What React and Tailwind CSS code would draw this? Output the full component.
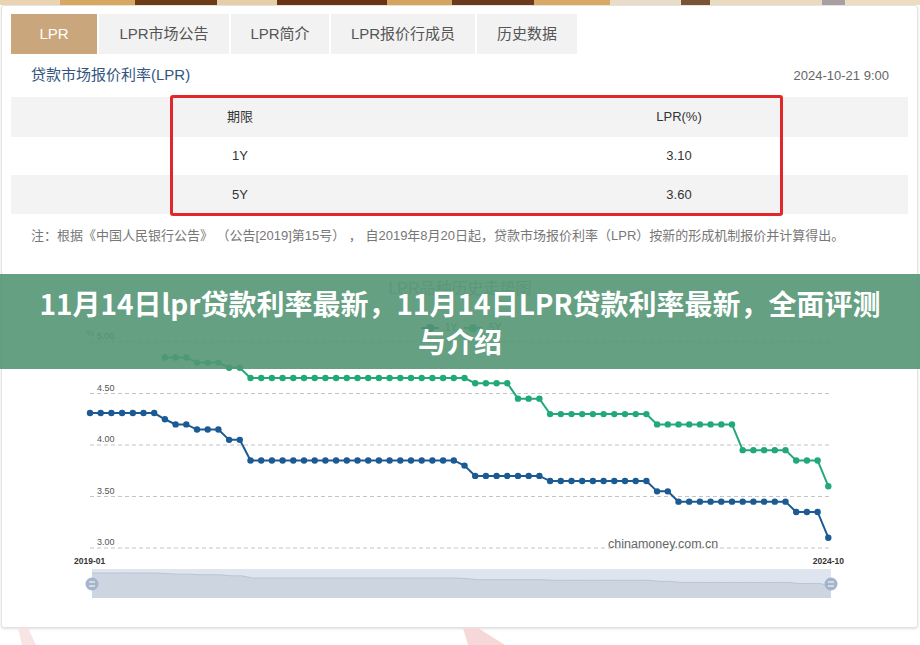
import React from 'react';

const strip = [
  { w: 'w-[60px]', c: 'bg-[#e9d3b0]' },
  { w: 'w-[75px]', c: 'bg-[#d9a860]' },
  { w: 'w-[82px]', c: 'bg-[#6e3b17]' },
  { w: 'w-[60px]', c: 'bg-[#e6cfa8]' },
  { w: 'w-[110px]', c: 'bg-[#6a3414]' },
  { w: 'w-[65px]', c: 'bg-[#d6a45c]' },
  { w: 'w-[82px]', c: 'bg-[#6b3a1c]' },
  { w: 'w-[76px]', c: 'bg-[#d8a864]' },
  { w: 'w-[71px]', c: 'bg-[#e8dcc8]' },
  { w: 'w-[29px]', c: 'bg-[#7a5236]' },
  { w: 'w-[112px]', c: 'bg-[#eadbc0]' },
  { w: 'w-[23px]', c: 'bg-[#a8a0a0]' },
  { w: 'flex-1', c: 'bg-[#ecdcc0]' },
];

const tabs = [
  { label: 'LPR', w: 'w-[86px]', active: true },
  { label: 'LPR市场公告', w: 'w-[130px]' },
  { label: 'LPR简介', w: 'w-[98px]' },
  { label: 'LPR报价行成员', w: 'w-[144px]' },
  { label: '历史数据', w: 'w-[100px]' },
];

const rep = (v, n) => Array(n).fill(v);

// 2019-01 ~ 2024-10, 每月一个点
const oneY = [
  ...rep(4.31, 7), 4.25, 4.2, 4.2, 4.15, 4.15, 4.15, 4.05, 4.05,
  ...rep(3.85, 20), 3.8, ...rep(3.7, 7), ...rep(3.65, 10),
  3.55, 3.55, ...rep(3.45, 11), 3.35, 3.35, 3.35, 3.1,
];
const fiveY = [
  ...rep(null, 7), 4.85, 4.85, 4.85, 4.8, 4.8, 4.8, 4.75, 4.75,
  ...rep(4.65, 21), ...rep(4.6, 4), ...rep(4.45, 3), ...rep(4.3, 10),
  ...rep(4.2, 8), ...rep(3.95, 5), 3.85, 3.85, 3.85, 3.6,
];

const X = (i) => 90 + i * 10.7;
const Y = (v) => 548 - (v - 3) * 103;

const Series = ({ data, color }) => {
  const pts = data
    .map((v, i) => (v == null ? null : [X(i), Y(v)]))
    .filter(Boolean);
  return (
    <g>
      <polyline
        points={pts.map((p) => p.join(',')).join(' ')}
        fill="none"
        stroke={color}
        strokeWidth="2"
      />
      {pts.map((p, i) => (
        <circle key={i} cx={p[0]} cy={p[1]} r="3.2" fill={color} />
      ))}
    </g>
  );
};

const grid = [
  { v: '5.00', y: 342 },
  { v: '4.50', y: 393.5 },
  { v: '4.00', y: 445 },
  { v: '3.50', y: 496.5 },
  { v: '3.00', y: 548 },
];

const Handle = ({ x }) => (
  <g>
    <circle cx={x} cy="584" r="6.5" fill="#a3b4cb" />
    <line x1={x - 3} y1="582" x2={x + 3} y2="582" stroke="#fff" strokeWidth="1" />
    <line x1={x - 3} y1="586" x2={x + 3} y2="586" stroke="#fff" strokeWidth="1" />
  </g>
);

const Chart = () => {
  const area = oneY.map((v, i) => {
    const x = 92 + i * (739 / 69);
    const y = 573 + (4.31 - v) * 11;
    return `${x},${y}`;
  });
  return (
    <svg width="914" height="369" viewBox="2 258 914 369" className="block">
      <text x="460" y="294" textAnchor="middle" fontSize="16" fill="#a3a3a3">
        LPR品种历史走势图
      </text>

      {/* 图例 */}
      <line x1="421" y1="328" x2="439" y2="328" stroke="#1c5a94" strokeWidth="2" />
      <circle cx="430" cy="328" r="4" fill="#1c5a94" />
      <text x="445" y="331" fontSize="10" fill="#666">1Y</text>
      <line x1="464" y1="328" x2="482" y2="328" stroke="#22a97a" strokeWidth="2" />
      <circle cx="473" cy="328" r="4" fill="#22a97a" />
      <text x="489" y="331" fontSize="10" fill="#666">5Y</text>

      <text x="86" y="336" fontSize="9" fill="#666">%</text>
      {grid.map((g) => (
        <g key={g.v}>
          <line x1="90" y1={g.y} x2="830" y2={g.y} stroke="#c4c4c4" strokeDasharray="4 3" />
          <text x="97" y={g.y - 3} fontSize="9" fill="#555">{g.v}</text>
        </g>
      ))}

      <text x="608" y="548" fontSize="12.5" fill="#666">chinamoney.com.cn</text>

      <Series data={fiveY} color="#22a97a" />
      <Series data={oneY} color="#1c5a94" />

      <text x="74" y="564" fontSize="8.5" fill="#333" fontWeight="bold">2019-01</text>
      <text x="844" y="564" fontSize="8.5" fill="#333" fontWeight="bold" textAnchor="end">2024-10</text>

      {/* 区域缩放条 */}
      <rect x="92" y="569" width="739" height="29" fill="#dfe5ee" />
      <polygon points={`92,598 ${area.join(' ')} 831,598`} fill="#cdd5e1" />
      <polyline points={area.join(' ')} fill="none" stroke="#b9c4d4" strokeWidth="1" />
      <Handle x={92} />
      <Handle x={831} />
    </svg>
  );
};

export default function App() {
  return (
    <div
      className="relative w-[920px] h-[645px] overflow-hidden bg-white"
      style={{ fontFamily: '"Liberation Sans", "Noto Sans CJK SC", sans-serif' }}
    >
      {/* 顶部背景条 */}
      <div className="flex h-[5px]">
        {strip.map((s, i) => (
          <div key={i} className={`${s.w} ${s.c}`} />
        ))}
      </div>

      <div className="ml-[1px] w-[917px] h-[623px] border border-[#e3e3e3] rounded-[3px] bg-white shadow-sm">
        {/* 标签页 */}
        <div className="flex gap-[2px] pt-[8px] ml-[9px]">
          {tabs.map((t) => (
            <div
              key={t.label}
              className={`${t.w} h-[40px] flex items-center justify-center text-[15px] ${
                t.active ? 'bg-[#c9a67b] text-white' : 'bg-[#f2f2f2] text-[#555]'
              }`}
            >
              {t.label}
            </div>
          ))}
        </div>

        <div className="h-[43px] flex items-center justify-between pl-[29px] pr-[28px]">
          <span className="text-[15px] text-[#34557f]">贷款市场报价利率(LPR)</span>
          <span className="text-[13px] text-[#666]">2024-10-21 9:00</span>
        </div>

        {/* 表格 */}
        <div className="relative mx-[9px] text-[13px] text-[#333]">
          <div className="grid grid-cols-[458px_420px_1fr] h-[40px] items-center bg-[#f3f3f3]">
            <span className="text-center">期限</span>
            <span className="text-center">LPR(%)</span>
          </div>
          <div className="grid grid-cols-[458px_420px_1fr] h-[38px] items-center bg-white">
            <span className="text-center">1Y</span>
            <span className="text-center">3.10</span>
          </div>
          <div className="grid grid-cols-[458px_420px_1fr] h-[39px] items-center bg-[#f3f3f3]">
            <span className="text-center">5Y</span>
            <span className="text-center">3.60</span>
          </div>
          <div className="absolute left-[159px] top-[-2px] w-[613px] h-[121px] border-[3px] border-[#e3262a] rounded-[3px]" />
        </div>

        <div className="h-[44px] flex items-center pl-[29px] text-[13px] text-[#777] whitespace-pre">
          注：根据《中国人民银行公告》 （公告[2019]第15号） ， 自2019年8月20日起，贷款市场报价利率（LPR）按新的形成机制报价并计算得出。
        </div>

        <Chart />
      </div>

      {/* 底部淡红装饰 */}
      <svg width="920" height="17" className="block">
        <polygon points="18,0 28,0 36,17 22,17" fill="#f9e4e4" />
        <polygon points="463,0 478,0 505,17 468,17" fill="#f6d8d8" />
      </svg>

      {/* 标题遮罩 */}
      <div className="absolute left-0 top-[274px] w-[920px] h-[95px] bg-[rgba(84,150,116,0.9)] flex items-center justify-center">
        <h1
          className="text-center text-white font-bold text-[28px] leading-[38px]"
          style={{ fontFamily: '"Noto Sans CJK SC", sans-serif' }}
        >
          11月14日lpr贷款利率最新，11月14日LPR贷款利率最新，全面评测
          <br />
          与介绍
        </h1>
      </div>
    </div>
  );
}
